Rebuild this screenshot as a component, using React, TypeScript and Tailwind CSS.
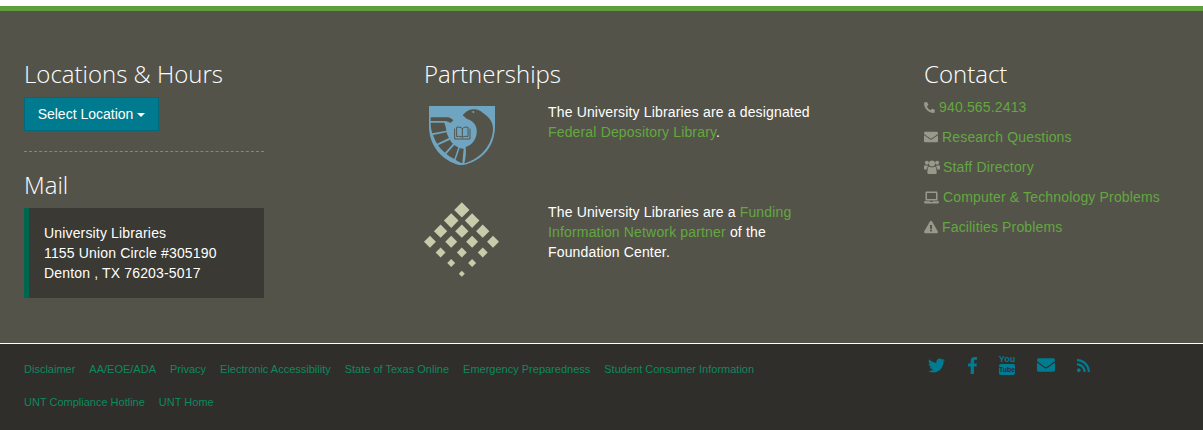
import { FaEnvelope, FaExclamationTriangle, FaFacebookF, FaLaptop, FaPhoneAlt, FaRss, FaTwitter } from "react-icons/fa";

const UsersIcon = () => (
  <svg viewBox="0 0 16 14" className="h-[14px] w-[16px]" fill="currentColor">
    <circle cx="8" cy="3.6" r="3" />
    <circle cx="2.9" cy="2.8" r="2" />
    <circle cx="13.1" cy="2.8" r="2" />
    <path d="M3.8 8.2C4.2 7 5.2 6.6 6 7C7.2 7.6 8.8 7.6 10 7C10.8 6.6 11.8 7 12.2 8.2L12.7 12.4C12.8 13.4 12 14 11.2 14H4.8C4 14 3.2 13.4 3.3 12.4Z" />
    <path d="M0 6.4C0 5.4 1 5 1.8 5.4C2.6 5.8 3.4 5.8 4 5.5L4.4 6.2C3.4 6.8 2.9 7.6 2.7 9.6H0.8C0.2 9.6 0 9.2 0 8.6Z" />
    <path d="M16 6.4C16 5.4 15 5 14.2 5.4C13.4 5.8 12.6 5.8 12 5.5L11.6 6.2C12.6 6.8 13.1 7.6 13.3 9.6H15.2C15.8 9.6 16 9.2 16 8.6Z" />
  </svg>
);

const contactLinks = [
  { icon: <FaPhoneAlt className="h-[11px] w-[11px]" />, label: "940.565.2413", gap: "mr-[4px]" },
  { icon: <FaEnvelope className="h-[14px] w-[14px]" />, label: "Research Questions", gap: "mr-[4px]" },
  { icon: <UsersIcon />, label: "Staff Directory", gap: "mr-[3px]" },
  { icon: <FaLaptop className="h-[15px] w-[15px]" />, label: "Computer & Technology Problems", gap: "mr-[4px]" },
  { icon: <FaExclamationTriangle className="h-[14px] w-[14px]" />, label: "Facilities Problems", gap: "mr-[4px]" },
];

const footerLinks = [
  "Disclaimer",
  "AA/EOE/ADA",
  "Privacy",
  "Electronic Accessibility",
  "State of Texas Online",
  "Emergency Preparedness",
  "Student Consumer Information",
  "UNT Compliance Hotline",
  "UNT Home",
];

const diamonds = [
  [139, 45, 23], [107, 77, 22], [170, 77, 22], [75, 109, 20], [139, 109, 20], [202, 109, 20],
  [43, 141, 18], [107, 141, 18], [170, 141, 18], [233, 141, 18], [75, 173, 15], [139, 173, 15],
  [202, 173, 15], [107, 205, 12], [170, 205, 12], [139, 237, 9],
];

// feather cells of the eagle's left wing
const feathers = [
  "M17 46H68C74 47 80 50 85 55L76 63C70 59 64 57 56 57H17Z",
  "M17 62H58C61 70 63 78 64 86L22 94C19 84 17 74 17 62Z",
  "M24 99L65 91C66 98 69 103 72 108L36 125C31 117 27 108 24 99Z",
  "M39 130L75 113C77 118 80 122 84 125L60 152C52 146 45 138 39 130Z",
  "M64 156L88 129C91 132 95 134 100 136L88 171C79 167 71 162 64 156Z",
  "M92 173L104 138C108 139 112 140 116 140L112 184C105 181 98 178 92 173Z",
];

const DepositoryLogo = () => (
  <svg viewBox="12 12 198 177" className="ml-[5px] mt-[4px] h-[59px] w-[66px]">
    <path d="M12 12H210V72C210 135 170 180 108 190C55 180 12 135 12 72Z" fill="#6fa5c0" />
    <path
      d="M113 40C120 32 130 22 145 22C160 22 168 28 175 34C195 48 204 62 204 82C202 130 165 172 118 184C122 170 124 150 122 135C142 130 158 108 155 82C153 65 140 55 125 50Z"
      fill="#54534a"
    />
    {feathers.map((d) => (
      <path key={d} d={d} fill="#54534a" />
    ))}
    <circle cx="145" cy="30" r="3" fill="#6fa5c0" />
    <path d="M95 76C102 74 108 76 112 80C116 76 122 74 129 76V104C122 102 116 103 112 106C108 103 102 102 95 104Z" fill="none" stroke="#54534a" strokeWidth="3" />
    <path d="M112 80V106M89 80V111H135V80" fill="none" stroke="#54534a" strokeWidth="3" />
  </svg>
);

const FoundationLogo = () => (
  <svg viewBox="25 22 226 224" className="h-[75px] w-[75px]">
    {diamonds.map(([x, y, r]) => (
      <polygon key={`${x}-${y}`} points={`${x},${y - r} ${x + r},${y} ${x},${y + r} ${x - r},${y}`} fill="#c8ccab" />
    ))}
  </svg>
);

const Heading = ({ children }: { children: string }) => (
  <h2 className="mb-[10px] font-['Open_Sans',sans-serif] text-[24px] font-light leading-[26px] tracking-normal text-white">{children}</h2>
);

const Green = ({ children }: { children: string }) => <a className="text-[#62a83e]">{children}</a>;

export default function App() {
  return (
    <div className="min-h-[430px] bg-white pt-[6px] font-['Liberation_Sans',Arial,sans-serif] text-[14px] leading-[20px] tracking-[0.16px]">
      <footer className="border-t-[5px] border-[#5d9f3c] bg-[#54534a] text-white">
        <div className="flex px-[24px] pb-[45px] pt-[50px]">
          <section className="w-[400px]">
            <Heading>Locations &amp; Hours</Heading>
            <button className="flex h-[34px] w-[135px] items-center justify-center gap-[4px] border border-[#006a7c] bg-[#007a8e] tracking-normal text-white">
              Select Location
              <span className="mt-[2px] border-x-[4px] border-t-[4px] border-x-transparent border-t-white" />
            </button>
            <div className="mb-[20px] mt-[20px] w-[240px] border-t border-dashed border-[#6f9c48]" />
            <Heading>Mail</Heading>
            <address className="h-[90px] w-[240px] border-l-[5px] border-[#00674f] bg-[#3a3934] py-[15px] pl-[15px] not-italic">
              University Libraries
              <br />
              1155 Union Circle #305190
              <br />
              Denton , TX 76203-5017
            </address>
          </section>

          <section className="w-[500px]">
            <h2 className="mb-[15px] font-['Open_Sans',sans-serif] text-[24px] font-light leading-[26px] tracking-normal text-white">Partnerships</h2>
            <div className="flex h-[100px]">
              <div className="w-[124px]">
                <DepositoryLogo />
              </div>
              <p className="w-[270px]">
                The University Libraries are a designated <Green>Federal Depository Library</Green>.
              </p>
            </div>
            <div className="flex">
              <div className="w-[124px]">
                <FoundationLogo />
              </div>
              <p className="w-[270px]">
                The University Libraries are a <Green>Funding Information Network partner</Green> of the Foundation Center.
              </p>
            </div>
          </section>

          <section>
            <Heading>Contact</Heading>
            <ul className="flex flex-col gap-[10px]">
              {contactLinks.map((link) => (
                <li key={link.label} className="flex h-[20px] items-center text-[#62a83e]">
                  <span className={`${link.gap} text-[#98998a]`}>{link.icon}</span>
                  {link.label}
                </li>
              ))}
            </ul>
          </section>
        </div>
      </footer>

      <div className="flex h-[87px] border-t border-white bg-[#2f2e2a] pl-[24px] pt-[11px] tracking-normal">
        <nav className="mt-[6px] flex w-[804px] flex-wrap content-start gap-x-[14px] gap-y-[17px] text-[11px] leading-[16px] text-[#0c8a5f]">
          {footerLinks.map((label) => (
            <a key={label}>{label}</a>
          ))}
        </nav>
        <div className="ml-[100px] flex h-[20px] items-center text-[#007c92]">
          <FaTwitter className="h-[17px] w-[17px]" />
          <FaFacebookF className="ml-[22px] h-[17px] w-[11px]" />
          <span className="ml-[21px] flex w-[16px] flex-col items-center font-bold">
            <span className="text-[9px] leading-[9px]">You</span>
            <span className="w-[16px] rounded-[2px] bg-[#007c92] text-center text-[7px] leading-[11px] text-[#2f2e2a]">Tube</span>
          </span>
          <FaEnvelope className="ml-[22px] h-[18px] w-[18px]" />
          <FaRss className="ml-[21px] h-[15px] w-[15px]" />
        </div>
      </div>
    </div>
  );
}
